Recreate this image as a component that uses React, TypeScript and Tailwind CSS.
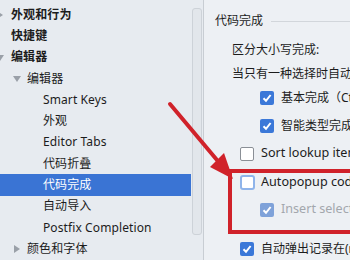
import React from "react";

const font = { fontFamily: '"Noto Sans", "Noto Sans CJK SC", sans-serif' };

function Tri({ dir }: { dir: "right" | "down" }) {
  return (
    <svg width="8" height="8" viewBox="0 0 8 8">
      {dir === "right" ? (
        <polygon points="1,0 7,4 1,8" fill="#9aa0a8" />
      ) : (
        <polygon points="0,1 8,1 4,7" fill="#9aa0a8" />
      )}
    </svg>
  );
}

function Check({ kind }: { kind: "on" | "off" | "focus" | "disabled" }) {
  if (kind === "off")
    return <div className="w-[14px] h-[14px] shrink-0 bg-white border border-[#8a8f96] rounded-[2px]" />;
  if (kind === "focus")
    return <div className="w-[15px] h-[15px] shrink-0 bg-white border-2 border-[#8fb4ea] rounded-[3px]" />;
  const bg = kind === "on" ? "bg-[#3b78d8]" : "bg-[#7fa2d9]";
  return (
    <div className={`w-[14px] h-[14px] shrink-0 ${bg} rounded-[2px] flex items-center justify-center`}>
      <svg width="10" height="10" viewBox="0 0 10 10">
        <polyline points="1.5,5.2 4,7.8 8.6,2" fill="none" stroke="white" strokeWidth="2" />
      </svg>
    </div>
  );
}

const leftRows: { t: string; x: number; bold?: boolean; arrow?: "right" | "down"; ax?: number; sel?: boolean }[] = [
  { t: "外观和行为", x: 11, bold: true, arrow: "right", ax: -4 },
  { t: "快捷键", x: 11, bold: true },
  { t: "编辑器", x: 11, bold: true, arrow: "down", ax: -4 },
  { t: "编辑器", x: 27, arrow: "down", ax: 13 },
  { t: "Smart Keys", x: 43 },
  { t: "外观", x: 43 },
  { t: "Editor Tabs", x: 43 },
  { t: "代码折叠", x: 43 },
  { t: "代码完成", x: 43, sel: true },
  { t: "自动导入", x: 43 },
  { t: "Postfix Completion", x: 43 },
  { t: "颜色和字体", x: 27, arrow: "right", ax: 13 },
];

export default function App() {
  return (
    <div className="relative w-[350px] h-[260px] overflow-hidden flex text-[12px] text-[#1c1c1c]" style={font}>
      {/* left tree */}
      <div className="w-[203px] h-full bg-[#e7ebf0] flex shrink-0">
        <div className="w-[191px] pt-[4px] flex flex-col">
          {leftRows.map((r, i) => (
            <div
              key={i}
              className={`relative h-[21.3px] flex items-center ${r.sel ? "bg-[#3a74d4] text-white" : ""} ${r.bold ? "font-bold" : ""}`}
            >
              {r.arrow && (
                <div className="absolute top-[7px]" style={{ left: r.ax }}>
                  <Tri dir={r.arrow} />
                </div>
              )}
              <span className="whitespace-nowrap tracking-[0.1px]" style={{ paddingLeft: r.x }}>
                {r.t}
              </span>
            </div>
          ))}
        </div>
        <div className="pt-[8px] pl-[1px]">
          <div className="w-[10px] h-[227px] rounded-[3px] border border-[#cdd2d8] bg-[#e2e6eb]" />
        </div>
      </div>
      <div className="w-[1px] h-full bg-[#c8cdd3] shrink-0" />
      {/* right panel */}
      <div className="flex-1 h-full bg-[#edf0f4] flex flex-col overflow-hidden">
        <div className="h-[24px] mt-[10px] flex items-center">
          <span className="pl-[11px] whitespace-nowrap">代码完成</span>
          <div className="flex-1 h-[1px] bg-[#d2d6db] ml-[8px]" />
        </div>
        <div className="h-[24px] mt-[6px] flex items-center pl-[28px] whitespace-nowrap">区分大小写完成:</div>
        <div className="h-[24px] mt-[1px] flex items-center pl-[28px] whitespace-nowrap">当只有一种选择时自动插入</div>
        <div className="h-[24px] mt-[1px] flex items-center pl-[56px] gap-[7px] whitespace-nowrap">
          <Check kind="on" />
          <span>基本完成（Ctrl+空格）</span>
        </div>
        <div className="h-[24px] mt-[5px] flex items-center pl-[56px] gap-[7px] whitespace-nowrap">
          <Check kind="on" />
          <span>智能类型完成（Ctrl+Shift+空格）</span>
        </div>
        <div className="h-[24px] mt-[5px] flex items-center pl-[36px] gap-[7px] whitespace-nowrap">
          <Check kind="off" />
          <span className="text-[12.6px]">Sort lookup items lexicographically</span>
        </div>
        <div className="h-[24px] mt-[6px] flex items-center pl-[36px] gap-[6px] whitespace-nowrap">
          <Check kind="focus" />
          <span className="text-[12.6px]">Autopopup code completion</span>
        </div>
        <div className="h-[24px] mt-[4px] flex items-center pl-[56px] gap-[7px] whitespace-nowrap">
          <Check kind="disabled" />
          <span className="text-[12.6px] text-[#a3a7ad]">Insert selected variant by typing dot</span>
        </div>
        <div className="h-[24px] mt-[16px] flex items-center pl-[36px] gap-[7px] whitespace-nowrap">
          <Check kind="on" />
          <span>自动弹出记录在(ms):</span>
        </div>
      </div>
      {/* annotation: red box */}
      <div className="absolute left-[228px] top-[169px] w-[140px] h-[65px] border-[4px] border-[#d0222a]" />
      {/* annotation: arrow */}
      <svg className="absolute left-0 top-0" width="350" height="260" viewBox="0 0 350 260">
        <line x1="170" y1="104" x2="222" y2="166" stroke="#d0222a" strokeWidth="4" strokeLinecap="round" />
        <polygon points="233,179 210,167 224,153" fill="#d0222a" />
      </svg>
    </div>
  );
}
